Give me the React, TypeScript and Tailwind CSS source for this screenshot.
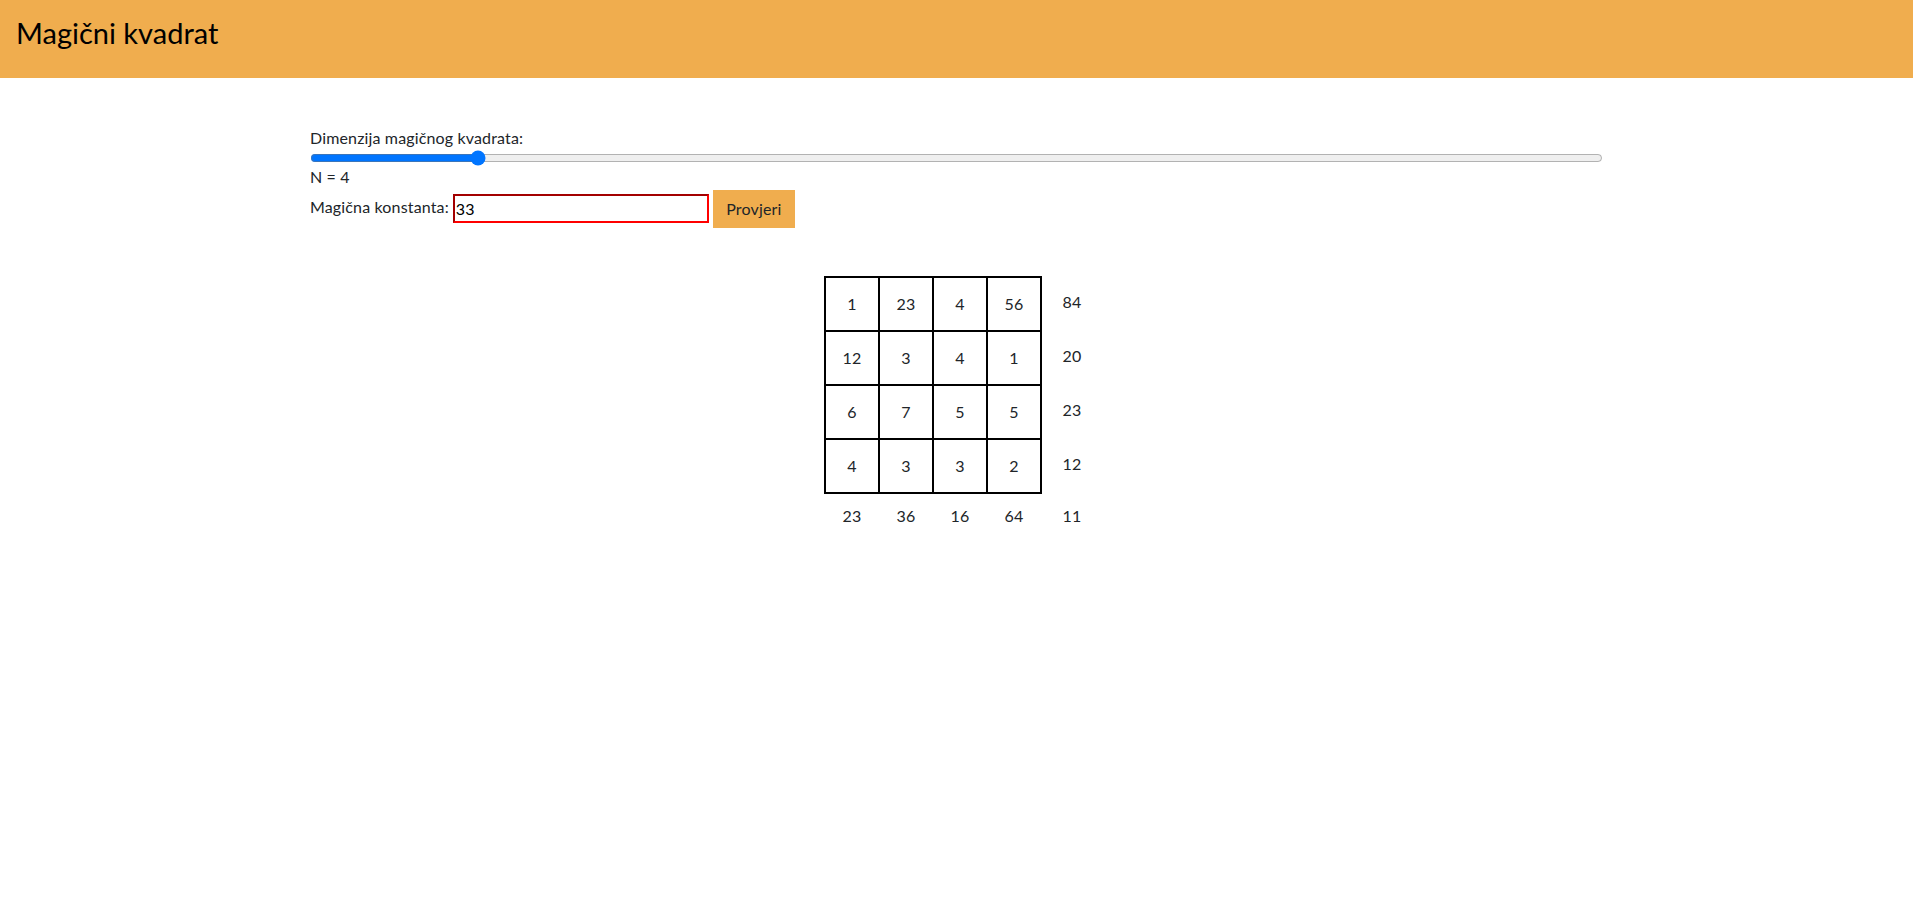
import React, { useState } from "react";

const grid = [
  [1, 23, 4, 56],
  [12, 3, 4, 1],
  [6, 7, 5, 5],
  [4, 3, 3, 2],
];

export default function App() {
  const [n, setN] = useState(4);
  const [k, setK] = useState("33");
  const rowSums = grid.map((r) => r.reduce((a, b) => a + b, 0));
  const colSums = grid[0].map((_, j) => grid.reduce((a, r) => a + r[j], 0));
  const diag = grid.reduce((a, r, i) => a + r[i], 0);

  return (
    <div className="min-h-[905px] bg-white font-['Lato','Liberation_Sans',sans-serif] text-[#212529]">
      <header className="h-[78px] bg-[#f0ad4e] px-[16px] pt-[15px]">
        <h1 className="text-[29px] leading-[35px] text-black">Magični kvadrat</h1>
      </header>

      <main className="mx-auto w-[1293px] pt-[48px] text-[16px] tracking-[0.15px]">
        <div className="leading-[24px]">Dimenzija magičnog kvadrata:</div>
        <div className="flex h-[15px] items-center">
          <input
            type="range"
            min={3}
            max={11}
            value={n}
            onChange={(e) => setN(Number(e.target.value))}
            className="m-0 w-full"
          />
        </div>
        <div className="leading-[24px]">N = {n}</div>
        <div className="mt-px flex items-start">
          <span className="mt-[5px] leading-[24px]">Magična konstanta:</span>
          <input
            type="text"
            value={k}
            onChange={(e) => setK(e.target.value)}
            className="ml-[4px] mt-[4px] h-[29px] w-[256px] border-2 border-b-[#ff0000] border-l-[#a30000] border-r-[#ff0000] border-t-[#a30000] px-px text-[16px] text-black outline-none"
          />
          <button className="ml-[4px] h-[38px] w-[82px] bg-[#f0ad4e] text-[16px] text-[#212529]">
            Provjeri
          </button>
        </div>

        <div className="ml-[514px] mt-[48px] grid grid-cols-[218px_60px] grid-rows-[218px_44px]">
          <div className="grid grid-cols-[repeat(4,52px)] grid-rows-[repeat(4,52px)] gap-[2px] bg-black p-[2px]">
            {grid.flat().map((v, i) => (
              <div key={i} className="flex items-center justify-center bg-white">
                {v}
              </div>
            ))}
          </div>
          <div className="flex flex-col gap-[2px] pt-[2px]">
            {rowSums.map((s, i) => (
              <div key={i} className="flex h-[52px] items-center justify-center pb-[4px]">
                {s}
              </div>
            ))}
          </div>
          <div className="flex gap-[2px] pl-[2px]">
            {colSums.map((s, i) => (
              <div key={i} className="flex w-[52px] items-center justify-center">
                {s}
              </div>
            ))}
          </div>
          <div className="flex items-center justify-center">{diag}</div>
        </div>
      </main>
    </div>
  );
}
